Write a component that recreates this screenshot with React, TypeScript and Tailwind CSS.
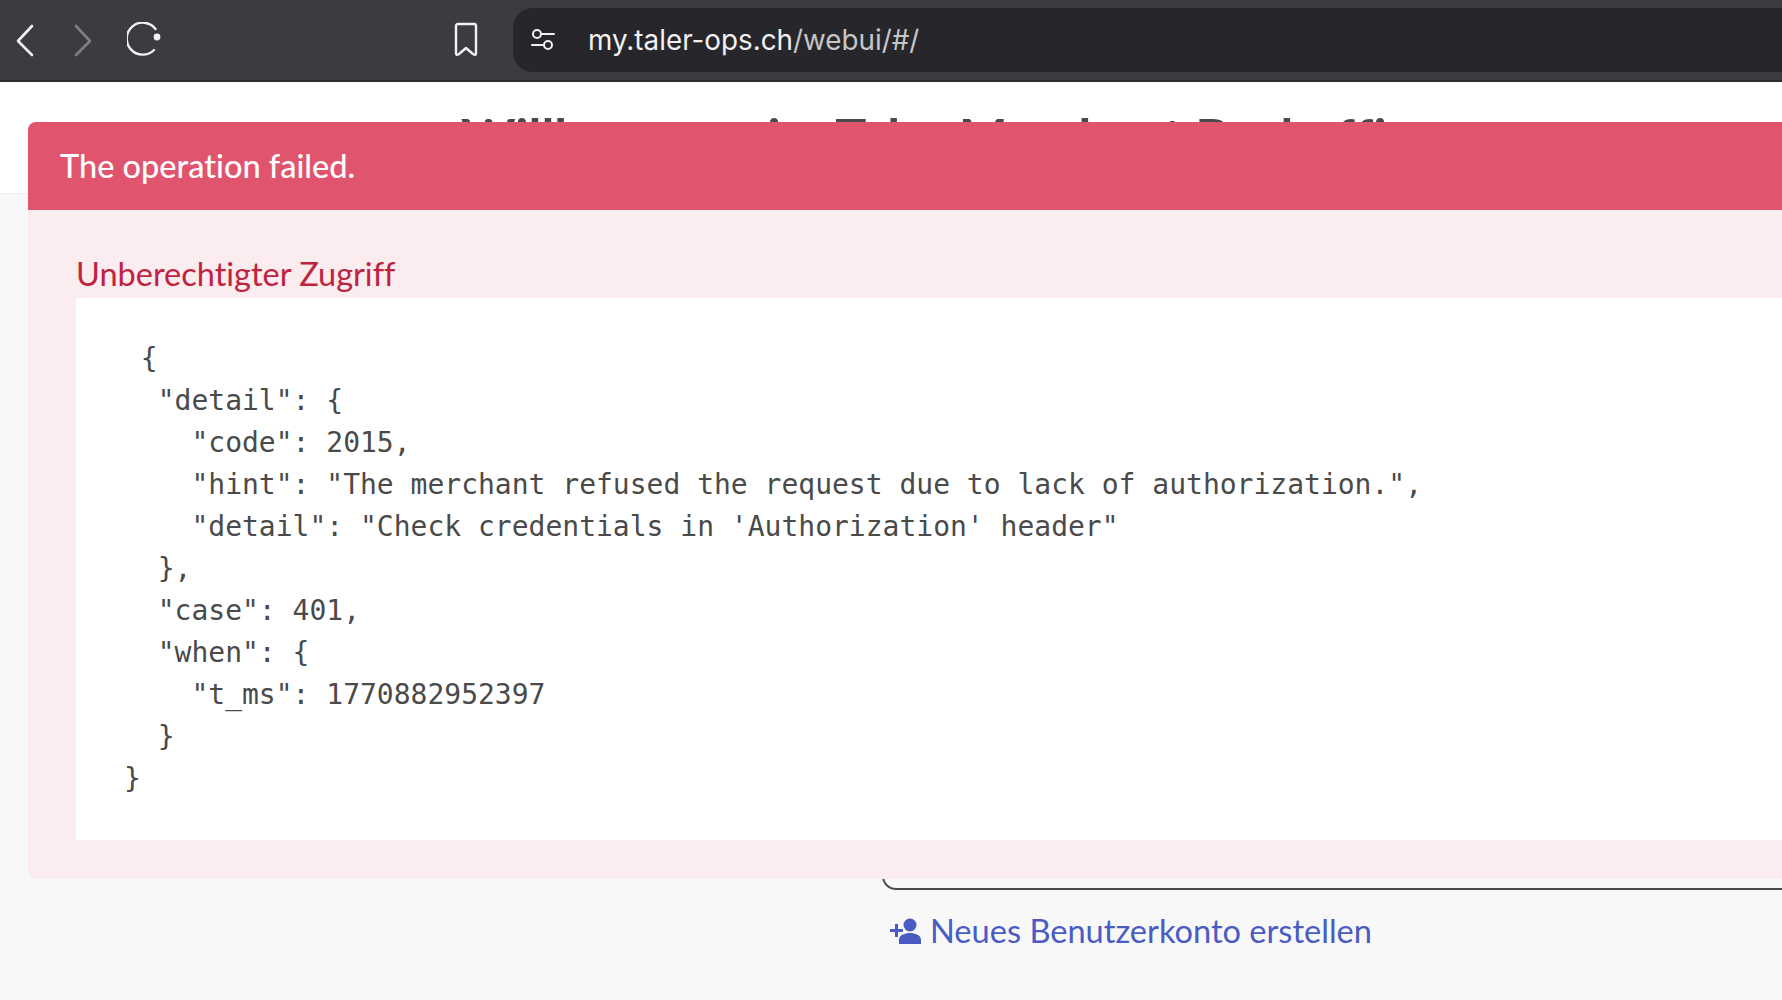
const jsonText = ` {
  "detail": {
    "code": 2015,
    "hint": "The merchant refused the request due to lack of authorization.",
    "detail": "Check credentials in 'Authorization' header"
  },
  "case": 401,
  "when": {
    "t_ms": 1770882952397
  }
}`;

const BrowserBar = () => {
  return (
    <div className="flex h-[82px] items-center border-b-2 border-[#2e2d31] bg-[#3c3b40]">
      <div className="flex w-[513px] shrink-0 items-center">
        <svg className="ml-[14px] h-[34px] w-[22px]" viewBox="0 0 22 34" fill="none" stroke="#f1f1f2" strokeWidth="2.6" strokeLinecap="round" strokeLinejoin="round">
          <path d="M18 3 L4 18 L18 32" />
        </svg>
        <svg className="ml-[36px] h-[34px] w-[22px]" viewBox="0 0 22 34" fill="none" stroke="#808083" strokeWidth="2.6" strokeLinecap="round" strokeLinejoin="round">
          <path d="M4 3 L18 18 L4 32" />
        </svg>
        <svg className="ml-[33px] h-[36px] w-[36px]" viewBox="0 0 36 36" fill="none" stroke="#f1f1f2" strokeWidth="2.4" strokeLinecap="round">
          <path d="M27 28 A16 16 0 1 1 28.5 7" />
          <circle cx="30" cy="15" r="3.4" fill="#f1f1f2" stroke="none" />
        </svg>
        <svg className="ml-[290px] h-[36px] w-[26px]" viewBox="0 0 26 36" fill="none" stroke="#f1f1f2" strokeWidth="2.4" strokeLinejoin="round">
          <path d="M3 4 Q3 2 5 2 H21 Q23 2 23 4 V31 Q23 34 20 32 L13 26 L6 32 Q3 34 3 31 Z" />
        </svg>
      </div>
      <div className="flex h-[64px] flex-1 items-center rounded-l-[20px] bg-[#27262a] font-['Inter',sans-serif] text-[27.8px] text-[#f1f1f2]">
        <svg className="ml-[17px] h-[26px] w-[26px]" viewBox="0 0 26 26" fill="none" stroke="#f1f1f2" strokeWidth="2" strokeLinecap="round">
          <circle cx="7" cy="7" r="4" />
          <path d="M11 7 H24" />
          <circle cx="18" cy="18" r="4" />
          <path d="M2 18 H14" />
        </svg>
        <span className="ml-[32px] pt-[2px]">
          my.taler-ops.ch<span className="text-[#c6c6c8]">/webui/#/</span>
        </span>
      </div>
    </div>
  );
};

const App = () => {
  return (
    <div className="relative h-[1000px] w-full overflow-hidden bg-[#f8f8f8] font-['Lato',sans-serif] [font-variant-ligatures:none]">
      <BrowserBar />

      {/* Page header, mostly hidden by the notification */}
      <div className="flex h-[112px] justify-center border-b border-[#ececec] bg-white pl-[118px] pt-[24px] text-[52px] font-bold leading-[60px] text-[#4a4a4a]">
        Willkommen im Taler Merchant Backoffice
      </div>

      {/* Login box and link below the notification */}
      <div className="ml-[882px] mr-[-40px] mt-[600px] h-[96px] rounded-b-[14px] border-2 border-t-0 border-[#4a4a4a]" />
      <a className="ml-[890px] mt-[19px] flex items-center gap-[9px] text-[32.6px] leading-[44px] text-[#4a5bc4]">
        <svg className="h-[26px] w-[31px]" viewBox="0 0 31 26" fill="#4a5bc4">
          <path d="M0 11 H5 V6 H8 V11 H13 V14 H8 V19 H5 V14 H0 Z" />
          <circle cx="20" cy="7" r="6.5" />
          <path d="M9 26 V22 C9 17 15 15 20 15 C25 15 31 17 31 22 V26 Z" />
        </svg>
        Neues Benutzerkonto erstellen
      </a>

      {/* Notification */}
      <div className="absolute left-[28px] top-[122px] w-[1840px] overflow-hidden rounded-[8px] bg-[#fbecef]">
        <div className="flex h-[88px] items-center bg-[#e0556d] pl-[32px] text-[32.5px] font-medium text-white">
          The operation failed.
        </div>
        <div className="pb-[39px] pl-[48px] pt-[42px]">
          <p className="h-[46px] text-[32.5px] leading-[44px] text-[#bf2340]">Unberechtigter Zugriff</p>
          <pre className="h-[542px] bg-white pl-[48px] pt-[40px] font-['DejaVu_Sans_Mono',monospace] text-[28px] leading-[42px] text-[#4a4a4a]">
            {jsonText}
          </pre>
        </div>
      </div>
    </div>
  );
};

export default App;
